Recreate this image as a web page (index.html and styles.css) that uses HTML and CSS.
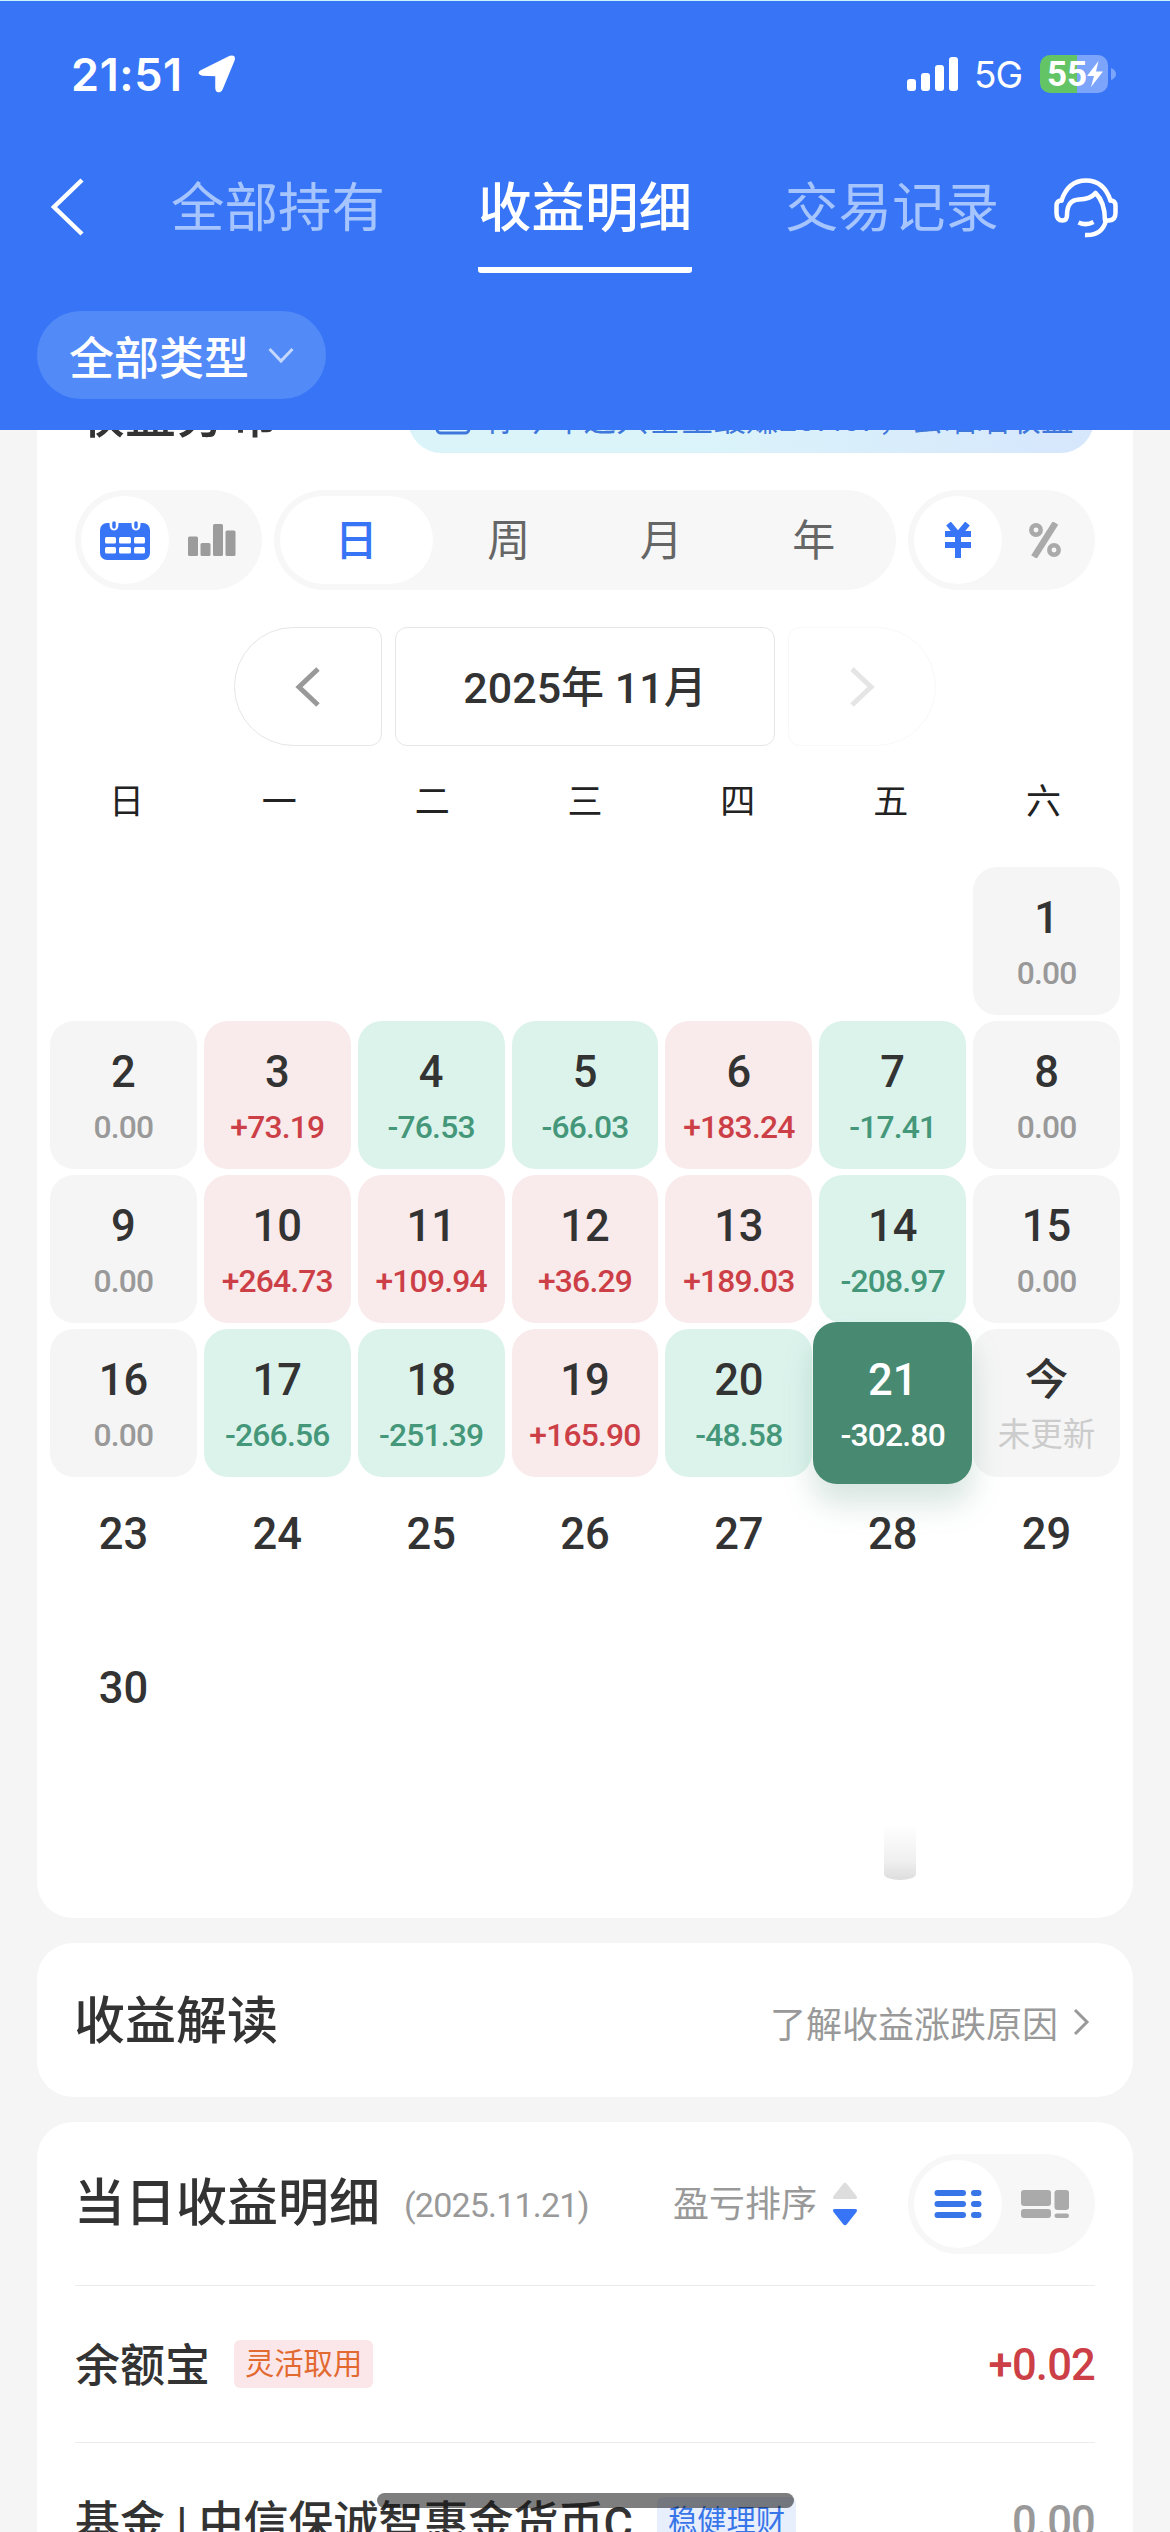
FILE: index.html
```
<!DOCTYPE html>
<html lang="zh-CN">

<head>
    <meta charset="UTF-8" />
    <title>收益明细</title>
    <link rel="stylesheet" href="styles.css">
</head>

<body>
    <header class="header">
        <div class="status">
            <span class="time">21:51</span>
            <svg class="location" width="38" height="38" viewBox="0 0 38 38"><path d="M3 16 L32 1.500 Q37 0 36 5 L24 34 Q22.500 37.500 19 36 Q18 35 18 33 L18 20.500 L4.500 20 Q-1 18.500 3 16Z" fill="#fff" stroke="#fff" stroke-width="1.500" /></svg>
            <svg class="signal" width="52" height="34" viewBox="0 0 52 34" fill="#fff"><rect x="0" y="22" width="9" height="12" rx="3" /><rect x="14" y="16" width="9" height="18" rx="3" /><rect x="28" y="8" width="9" height="26" rx="3" /><rect x="42" y="0" width="9" height="34" rx="3" /></svg>
            <span class="network">5G</span>
            <div class="battery">
                <span>55</span>
                <svg width="16" height="26" viewBox="0 0 16 26"><path d="M11.500 0 L0 15 L7 15 L4 26 L16 10.500 L9 10.500Z" fill="#fff" /></svg>
            </div>
            <svg class="battery-tip" width="5" height="12" viewBox="0 0 5 12"><path d="M0 0 Q5 2 5 6 Q5 10 0 12Z" fill="#7ba4fa" /></svg>
        </div>
        <nav class="nav">
            <svg class="back" width="34" height="58" viewBox="0 0 34 58"><path d="M31 2 L3 29 L31 56" fill="none" stroke="#fff" stroke-width="4.500" /></svg>
            <div class="tabs">
                <a class="tab">全部持有</a>
                <a class="tab active">收益明细</a>
                <a class="tab">交易记录</a>
            </div>
            <svg class="service" width="64" height="60" viewBox="0 0 64 60" fill="none" stroke="#fff" stroke-width="4.500" stroke-linecap="round" stroke-linejoin="round">
                <path d="M7.500 22.500 C12 9 21 2.500 32 2.500 C43 2.500 52 9 56.500 22.500" />
                <path d="M7.500 22.500 Q2.500 22.500 2.500 28 L2.500 35 Q2.500 42.500 8.500 42.500 Q13 42.500 13 37 Q13 22 25 21.500 Q36 21.500 41.500 15 Q51 24 51 42.500 L55 42.500 Q61.500 42 61.500 35 L61.500 28 Q61.500 22.500 56.500 22.500" />
                <path d="M24.500 44.500 Q32 48 39.500 44" stroke-linecap="butt" />
                <path d="M52 42.500 Q48 58 31 57" stroke-linecap="butt" />
            </svg>
        </nav>
        <div class="filter">
            <span>全部类型</span>
            <svg width="26" height="17" viewBox="0 0 26 17"><path d="M1.500 2 L13 14 L24.500 2" fill="none" stroke="#c4d7fd" stroke-width="3" /></svg>
        </div>
    </header>

    <main class="content">
        <section class="card distribution">
            <div class="card-head">
                <h2>收益分布</h2>
                <div class="banner">
                    <svg width="36" height="36" viewBox="0 0 36 36"><rect x="2" y="4" width="32" height="30" rx="4" fill="none" stroke="#3f78dd" stroke-width="3" /><path d="M9 21 L15 14 L20 18 L27 10" fill="none" stroke="#3f78dd" stroke-width="3" /></svg>
                    <span>你今年这只基金最赚267.67，去晒晒收益</span>
                </div>
            </div>

            <div class="switches">
                <div class="switch">
                    <span class="option selected">
                        <svg width="50" height="40" viewBox="0 0 50 40">
                            <rect x="0" y="3" width="50" height="37" rx="7" fill="#3875f6" />
                            <path d="M9.500 0 V4 Q9.500 10.500 14 10.500 Q18.500 10.500 18.500 4 V0Z M31.500 0 V4 Q31.500 10.500 36 10.500 Q40.500 10.500 40.500 4 V0Z" fill="#fff" />
                            <path d="M14 3 V7 M36 3 V7" stroke="#3875f6" stroke-width="3.500" stroke-linecap="round" />
                            <g fill="#fff"><rect x="5" y="17" width="11" height="6.500" rx="1.500" /><rect x="19" y="17" width="12" height="6.500" rx="1.500" /><rect x="34" y="17" width="11" height="6.500" rx="1.500" /><rect x="5" y="27" width="11" height="6.500" rx="1.500" /><rect x="19" y="27" width="12" height="6.500" rx="1.500" /><rect x="34" y="27" width="11" height="6.500" rx="1.500" /></g>
                        </svg>
                    </span>
                    <span class="option">
                        <svg width="48" height="32" viewBox="0 0 48 32" fill="#9c9c9c"><rect x="0" y="12.500" width="10" height="19.500" rx="1.500" /><rect x="12.500" y="19" width="10" height="13" rx="1.500" /><rect x="25" y="0" width="10" height="32" rx="1.500" /><rect x="37.500" y="6.500" width="10" height="25.500" rx="1.500" /></svg>
                    </span>
                </div>
                <div class="switch period">
                    <span class="option selected">日</span>
                    <span class="option">周</span>
                    <span class="option">月</span>
                    <span class="option">年</span>
                </div>
                <div class="switch">
                    <span class="option selected">
                        <svg width="28" height="36" viewBox="0 0 28 36" fill="none" stroke="#3875f6" stroke-width="6"><path d="M4.500 1.500 L14 13 L23.500 1.500 M14 11 V36 M1 12 H27 M1 23 H27" stroke-linejoin="round" /></svg>
                    </span>
                    <span class="option">
                        <svg width="32" height="36" viewBox="0 0 32 36" fill="none" stroke="#aaa"><circle cx="7" cy="8" r="4.700" stroke-width="4.500" /><circle cx="25" cy="28" r="4.700" stroke-width="4.500" /><path d="M26.500 1 L5 35" stroke-width="6.500" /></svg>
                    </span>
                </div>
            </div>

            <div class="month-nav">
                <span class="month-btn prev"><svg width="26" height="40" viewBox="0 0 26 40"><path d="M23 2 L4 20 L23 38" fill="none" stroke="#999" stroke-width="5" /></svg></span>
                <span class="month">2025年 11月</span>
                <span class="month-btn next"><svg width="26" height="40" viewBox="0 0 26 40"><path d="M3 2 L22 20 L3 38" fill="none" stroke="#999" stroke-width="5" /></svg></span>
            </div>

            <div class="weekdays">
                <span>日</span><span>一</span><span>二</span><span>三</span><span>四</span><span>五</span><span>六</span>
            </div>

            <div class="calendar">
                <div class="day flat first"><b>1</b><i>0.00</i></div>

                <div class="day flat"><b>2</b><i>0.00</i></div>
                <div class="day up"><b>3</b><i>+73.19</i></div>
                <div class="day down"><b>4</b><i>-76.53</i></div>
                <div class="day down"><b>5</b><i>-66.03</i></div>
                <div class="day up"><b>6</b><i>+183.24</i></div>
                <div class="day down"><b>7</b><i>-17.41</i></div>
                <div class="day flat"><b>8</b><i>0.00</i></div>

                <div class="day flat"><b>9</b><i>0.00</i></div>
                <div class="day up"><b>10</b><i>+264.73</i></div>
                <div class="day up"><b>11</b><i>+109.94</i></div>
                <div class="day up"><b>12</b><i>+36.29</i></div>
                <div class="day up"><b>13</b><i>+189.03</i></div>
                <div class="day down"><b>14</b><i>-208.97</i></div>
                <div class="day flat"><b>15</b><i>0.00</i></div>

                <div class="day flat"><b>16</b><i>0.00</i></div>
                <div class="day down"><b>17</b><i>-266.56</i></div>
                <div class="day down"><b>18</b><i>-251.39</i></div>
                <div class="day up"><b>19</b><i>+165.90</i></div>
                <div class="day down"><b>20</b><i>-48.58</i></div>
                <div class="day current"><b>21</b><i>-302.80</i></div>
                <div class="day flat today"><b>今</b><i>未更新</i></div>

                <div class="day"><b>23</b></div>
                <div class="day"><b>24</b></div>
                <div class="day"><b>25</b></div>
                <div class="day"><b>26</b></div>
                <div class="day"><b>27</b></div>
                <div class="day"><b>28</b></div>
                <div class="day"><b>29</b></div>

                <div class="day"><b>30</b></div>
            </div>
            <div class="pointer"></div>
        </section>

        <section class="card insight">
            <h2>收益解读</h2>
            <a class="more">
                <span>了解收益涨跌原因</span>
                <svg width="17" height="28" viewBox="0 0 17 28"><path d="M2 2 L14 14 L2 26" fill="none" stroke="#999" stroke-width="3" /></svg>
            </a>
        </section>

        <section class="card details">
            <div class="details-head">
                <h2>当日收益明细</h2>
                <span class="date">(2025.11.21)</span>
                <span class="sort">盈亏排序</span>
                <svg class="sort-icon" width="26" height="44" viewBox="0 0 26 44"><path d="M1.500 14 L11 2 Q13 -0.500 15 2 L24.500 14 Q26 17 23 17 L3 17 Q0 17 1.500 14Z" fill="#ddd" /><path d="M1.500 30 L11 42 Q13 44.500 15 42 L24.500 30 Q26 27 23 27 L3 27 Q0 27 1.500 30Z" fill="#3875f6" /></svg>
                <div class="switch">
                    <span class="option selected">
                        <svg width="48" height="30" viewBox="0 0 48 30" stroke="#3875e8" stroke-width="6" stroke-linecap="round"><path d="M3.500 4 H29 M3.500 15 H29 M3.500 26 H29 M40 4 H44.500 M40 15 H44.500 M40 26 H44.500" /></svg>
                    </span>
                    <span class="option">
                        <svg width="48" height="28" viewBox="0 0 48 28" fill="#aaa"><rect width="30" height="16" rx="3" /><rect y="19" width="30" height="9" rx="3" /><rect x="33.500" width="14.500" height="20" rx="3" /><rect x="33.500" y="23.500" width="14.500" height="4.500" rx="2.200" /></svg>
                    </span>
                </div>
            </div>
            <div class="row">
                <span class="name">余额宝</span>
                <span class="tag hot">灵活取用</span>
                <span class="value gain">+0.02</span>
            </div>
            <div class="row">
                <span class="name">基金 | 中信保诚智惠金货币C</span>
                <span class="tag steady">稳健理财</span>
                <span class="value">0.00</span>
            </div>
        </section>
    </main>

    <div class="home-indicator"></div>
</body>

</html>
```
FILE: styles.css
```
* {
    box-sizing: border-box;
}
body {
    margin: 0;
    width: 1170px;
    height: 2532px;
    overflow: hidden;
    display: flex;
    flex-direction: column;
    background: #f5f5f5;
    color: #333;
    font-family: Roboto, "Noto Sans CJK SC", sans-serif;
    position: relative;
}
svg {
    display: block;
    flex: none;
}
h2 {
    margin: 0;
    font-size: 51px;
    font-weight: 500;
    line-height: 60px;
    white-space: nowrap;
}

/* header */
.header {
    flex: none;
    height: 430px;
    background: #3875f6;
    border-top: 1px solid #c9f3fb;
    color: #fff;
}
.status {
    display: flex;
    align-items: center;
    height: 148px;
    padding: 0 54px 2px 71px;
    font-family: Inter, sans-serif;
}
.time {
    width: 127px;
    font-size: 45px;
    font-weight: 600;
    letter-spacing: 0.6px;
}
.signal {
    margin-left: auto;
}
.network {
    margin-left: 15px;
    width: 50px;
    font-size: 37px;
    letter-spacing: -1px;
}
.battery {
    display: flex;
    align-items: center;
    margin-left: 16px;
    padding-left: 7px;
    width: 68px;
    height: 38px;
    border-radius: 10px;
    background: linear-gradient(90deg, #63c466 54%, #7ba4fa 54%);
    font-family: Roboto, sans-serif;
    font-size: 35px;
    font-weight: 700;
}
.battery-tip {
    margin-left: 3px;
}
.nav {
    display: flex;
    padding: 29px 52px 0 51px;
    height: 162px;
}
.service {
    margin-left: auto;
}
.tabs {
    display: flex;
    gap: 93px;
    margin-left: 86px;
}
.tab {
    height: 95px;
    padding-top: 2px;
    font-size: 53.5px;
    line-height: 58px;
    color: #a6c4fd;
}
.tab.active {
    color: #fff;
    font-weight: 500;
    border-bottom: 6px solid #fff;
    border-radius: 3px;
}
.filter {
    display: flex;
    align-items: center;
    gap: 19px;
    margin-left: 37px;
    padding-left: 32px;
    width: 289px;
    height: 88px;
    border-radius: 44px;
    background: #528af8;
    font-size: 45px;
    font-weight: 500;
}

/* cards */
.content {
    flex: 1;
    min-height: 0;
    overflow: hidden;
    padding: 0 37px;
}
.card {
    margin-bottom: 25px;
    border-radius: 36px;
    background: #fff;
}
.distribution {
    height: 1548px;
    margin-top: -60px;
    padding: 16px 13px 0;
}
.card-head {
    display: flex;
    justify-content: space-between;
    padding: 0 26px 0 24px;
}
.banner {
    display: flex;
    align-items: center;
    gap: 15px;
    width: 686px;
    height: 67px;
    padding: 0 0 6px 27px;
    border-radius: 34px;
    background: linear-gradient(100deg, #dbf4fa 40%, #d6e6fc);
    color: #3f78dd;
    font-size: 32.5px;
    white-space: nowrap;
}
.switches {
    display: flex;
    gap: 12px;
    margin: 37px 25px 0;
}
.switch {
    display: flex;
    width: 187px;
    height: 100px;
    padding: 6px;
    border-radius: 50px;
    background: #f7f7f7;
}
.option {
    display: flex;
    flex: 1;
    align-items: center;
    justify-content: center;
    border-radius: 44px;
    font-size: 43px;
    color: #666;
}
.option.selected {
    background: #fff;
    color: #3875f6;
}
.period {
    width: 622px;
}
.period .option {
    padding-bottom: 6px;
}
.period .selected {
    font-weight: 500;
}
.month-nav {
    display: flex;
    justify-content: center;
    gap: 13px;
    margin-top: 37px;
}
.month-nav span {
    display: flex;
    align-items: center;
    justify-content: center;
    height: 119px;
    border: 1px solid #e6e6e6;
}
.month-btn {
    width: 148px;
}
.month-nav .prev {
    border-radius: 60px 12px 12px 60px;
}
.month-nav .next {
    border-radius: 12px 60px 60px 12px;
    opacity: 0.25;
}
.month-nav .month {
    width: 380px;
    padding-bottom: 5px;
    border-radius: 12px;
    font-size: 43px;
    font-weight: 500;
}
.weekdays {
    display: grid;
    grid-template-columns: repeat(7, 1fr);
    margin-top: 32px;
    font-size: 35px;
    line-height: 50px;
    text-align: center;
    color: #222;
}
.calendar {
    display: grid;
    grid-template-columns: repeat(7, 1fr);
    grid-auto-rows: 148px;
    gap: 6px 7px;
    margin-top: 39px;
}
.day {
    padding-top: 22px;
    border-radius: 24px;
    text-align: center;
}
.day b {
    display: block;
    font-size: 43.5px;
    font-weight: 500;
    line-height: 60px;
}
.day i {
    display: block;
    font-size: 31.8px;
    font-style: normal;
    font-weight: 500;
    line-height: 48px;
    letter-spacing: -0.8px;
    color: #999;
}
.first {
    grid-column: 7;
}
.flat {
    background: #f5f5f5;
}
.up {
    background: #f9eaeb;
}
.day.up i {
    color: #cc3f46;
}
.down {
    background: #dcf3ec;
}
.day.down i {
    color: #45977a;
}
/* picked day grows over its neighbours */
.current {
    z-index: 1;
    margin: -7px -6px;
    padding-top: 29px;
    background: #478971;
    color: #fff;
    box-shadow: 0 20px 30px rgba(71, 137, 113, 0.22);
}
.day.current i {
    color: #fff;
}
.day.today i {
    color: #ccc;
    font-weight: 400;
    letter-spacing: 0;
    font-size: 32.5px;
}
.pointer {
    width: 32px;
    height: 56px;
    margin: 39px 0 0 834px;
    border-radius: 0 0 16px 16px / 0 0 6px 6px;
    background: linear-gradient(#fff, #f0f0f0 65%, #ddd);
}

.insight {
    display: flex;
    align-items: center;
    justify-content: space-between;
    height: 154px;
    padding: 3px 43px 0 37px;
}
.more {
    display: flex;
    align-items: center;
    gap: 15px;
    color: #999;
    font-size: 36px;
}

.details {
    height: 520px;
    padding: 0 38px;
}
.details-head {
    display: flex;
    align-items: center;
    height: 163px;
    color: #999;
    font-size: 36px;
}
.details-head h2 {
    margin-left: -1px;
    color: #333;
}
.date {
    margin-left: 24px;
    padding-top: 2px;
    font-size: 34px;
    letter-spacing: -0.8px;
}
.sort {
    margin-left: auto;
    padding-bottom: 5px;
}
.sort-icon {
    margin: 0 50px 0 15px;
}
.row {
    display: flex;
    align-items: center;
    height: 157px;
    border-top: 1px solid #ececec;
}
.name {
    padding-bottom: 4px;
    font-size: 45px;
    font-weight: 500;
    white-space: nowrap;
}
.tag {
    margin-left: 24px;
    padding: 0 11px;
    border-radius: 6px;
    font-size: 29.3px;
    line-height: 48px;
}
.hot {
    background: #fbe6ea;
    color: #e2692f;
}
.steady {
    background: #e7effd;
    color: #3875e8;
}
.value {
    margin-left: auto;
    padding-top: 2px;
    font-size: 43.5px;
    font-weight: 500;
    letter-spacing: -0.8px;
    color: #999;
}
.gain {
    color: #cc3f46;
}

.home-indicator {
    position: absolute;
    left: 377px;
    bottom: 24px;
    width: 417px;
    height: 15px;
    border-radius: 8px;
    background: rgba(20, 20, 20, 0.55);
}
```
